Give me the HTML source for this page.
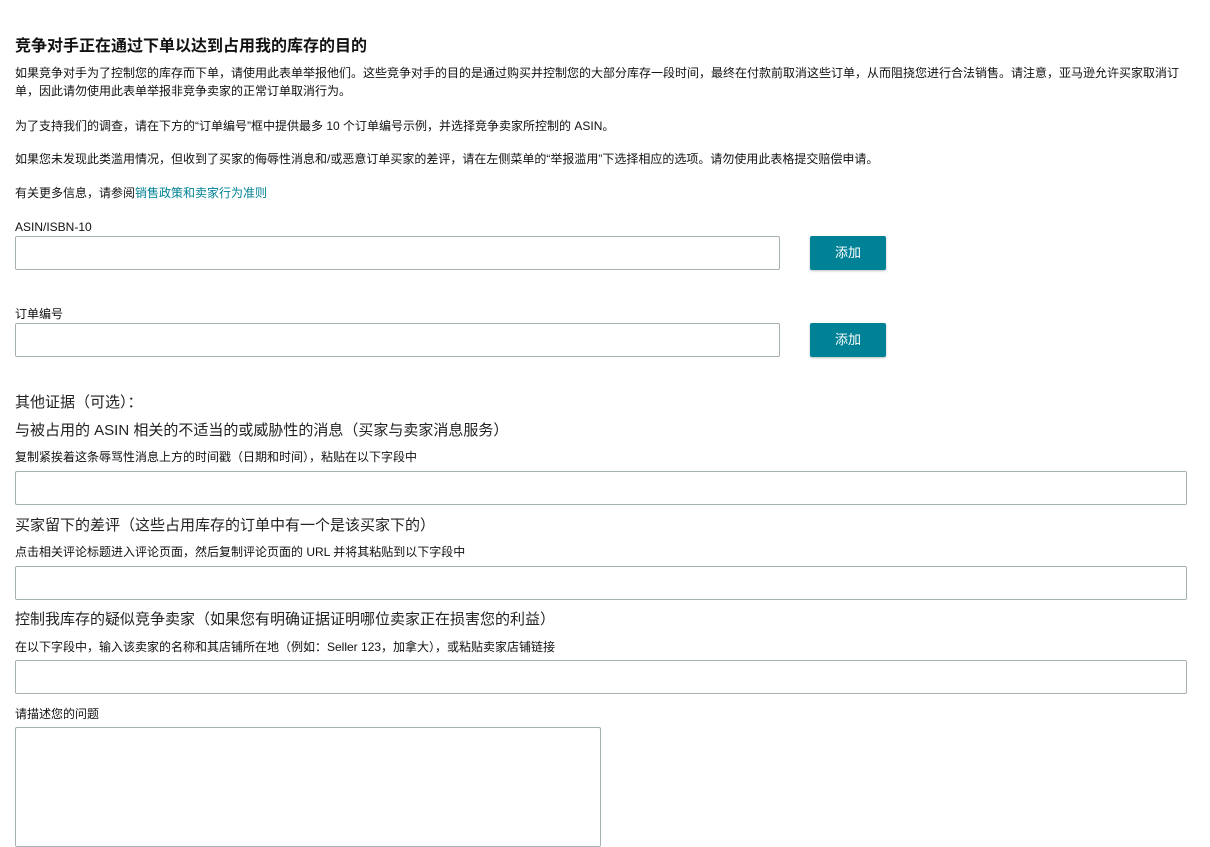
<!DOCTYPE html>
<html><head><meta charset="utf-8"><style>
body{margin:0;width:1210px;height:833px;overflow:hidden;background:#fff;font-family:"Liberation Sans","Noto Sans CJK SC",sans-serif;color:#111;position:relative}
.a{position:absolute;white-space:nowrap}
.s{font-size:12px;line-height:18px}
.h{font-size:15px;line-height:20px;color:#222}
.in{position:absolute;border:1px solid #a6b0b3;border-radius:2px;box-sizing:border-box;background:#fff}
.btn{position:absolute;width:76px;height:34px;background:#008296;color:#fff;font-size:13px;line-height:34px;text-align:center;border-radius:2px;box-shadow:0 1px 2px rgba(0,0,0,.25)}
a{color:#008296;text-decoration:none}
</style></head><body>
<div class="a" style="left:15px;top:36px;font-size:16px;font-weight:bold;line-height:22px">竞争对手正在通过下单以达到占用我的库存的目的</div>
<div class="a s" style="left:15px;top:64px;white-space:normal;width:1180px">如果竞争对手为了控制您的库存而下单，请使用此表单举报他们。这些竞争对手的目的是通过购买并控制您的大部分库存一段时间，最终在付款前取消这些订单，从而阻挠您进行合法销售。请注意，亚马逊允许买家取消订单，因此请勿使用此表单举报非竞争卖家的正常订单取消行为。</div>
<div class="a s" style="left:15px;top:117px">为了支持我们的调查，请在下方的“订单编号”框中提供最多 10 个订单编号示例，并选择竞争卖家所控制的 ASIN。</div>
<div class="a s" style="left:15px;top:150px">如果您未发现此类滥用情况，但收到了买家的侮辱性消息和/或恶意订单买家的差评，请在左侧菜单的“举报滥用”下选择相应的选项。请勿使用此表格提交赔偿申请。</div>
<div class="a s" style="left:15px;top:184px">有关更多信息，请参阅<a>销售政策和卖家行为准则</a></div>
<div class="a s" style="left:15px;top:218px">ASIN/ISBN-10</div>
<div class="in" style="left:15px;top:236px;width:765px;height:34px"></div>
<div class="btn" style="left:810px;top:236px">添加</div>
<div class="a s" style="left:15px;top:305px">订单编号</div>
<div class="in" style="left:15px;top:323px;width:765px;height:34px"></div>
<div class="btn" style="left:810px;top:323px">添加</div>
<div class="a h" style="left:15px;top:393px">其他证据（可选）：</div>
<div class="a h" style="left:15px;top:421px">与被占用的 ASIN 相关的不适当的或威胁性的消息（买家与卖家消息服务）</div>
<div class="a s" style="left:15px;top:448px">复制紧挨着这条辱骂性消息上方的时间戳（日期和时间），粘贴在以下字段中</div>
<div class="in" style="left:15px;top:471px;width:1172px;height:34px"></div>
<div class="a h" style="left:15px;top:516px">买家留下的差评（这些占用库存的订单中有一个是该买家下的）</div>
<div class="a s" style="left:15px;top:543px">点击相关评论标题进入评论页面，然后复制评论页面的 URL 并将其粘贴到以下字段中</div>
<div class="in" style="left:15px;top:566px;width:1172px;height:34px"></div>
<div class="a h" style="left:15px;top:610px">控制我库存的疑似竞争卖家（如果您有明确证据证明哪位卖家正在损害您的利益）</div>
<div class="a s" style="left:15px;top:638px">在以下字段中，输入该卖家的名称和其店铺所在地（例如：Seller 123，加拿大），或粘贴卖家店铺链接</div>
<div class="in" style="left:15px;top:660px;width:1172px;height:34px"></div>
<div class="a s" style="left:15px;top:705px">请描述您的问题</div>
<div class="in" style="left:15px;top:727px;width:586px;height:120px"></div>
</body></html>
